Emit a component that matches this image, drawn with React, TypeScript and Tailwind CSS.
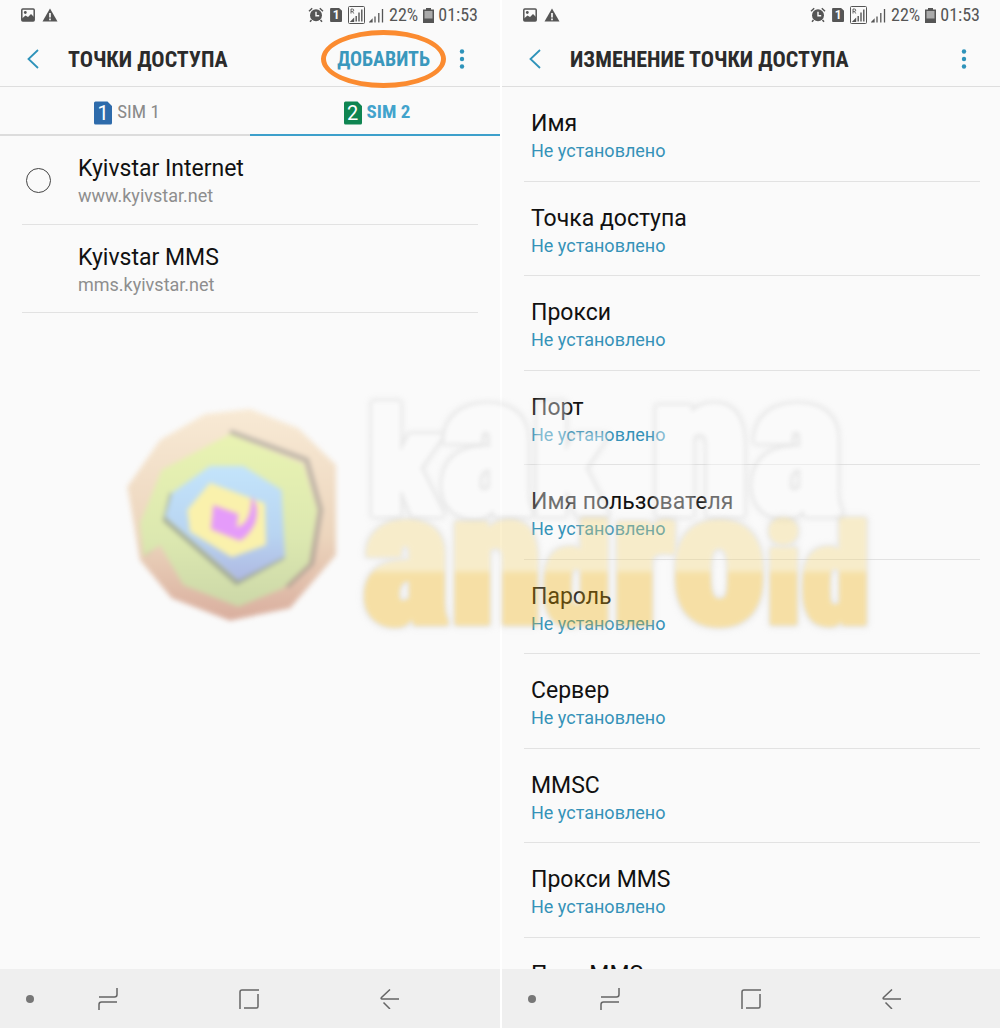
import React from "react";

const FIELDS = [
  "Имя",
  "Точка доступа",
  "Прокси",
  "Порт",
  "Имя пользователя",
  "Пароль",
  "Сервер",
  "MMSC",
  "Прокси MMS",
  "Порт MMS",
];

const CONDENSED = "font-['Roboto_Condensed',Roboto,sans-serif]";

function PictureIcon() {
  return (
    <svg viewBox="0 0 14 14" className="h-3.5 w-3.5" fill="none">
      <rect x="0.8" y="1" width="12.4" height="12" rx="1" stroke="#555" strokeWidth="1.5" />
      <path d="M1 10.5 4.5 7.5 7 9 10 6 13 9v4H1Z" fill="#555" />
      <circle cx="4.3" cy="4.5" r="1.4" fill="#555" />
    </svg>
  );
}

function WarningIcon() {
  return (
    <svg viewBox="0 0 16 14" className="h-3.5 w-4">
      <path d="M8 .5 15.5 13.5H.5Z" fill="#555" />
      <path d="M8 5v4.500M8 10.500v1.800" stroke="#fafafa" strokeWidth="1.700" />
    </svg>
  );
}

function AlarmIcon() {
  return (
    <svg viewBox="0 0 16 16" className="h-4 w-4" fill="none">
      <circle cx="8" cy="8.300" r="6" fill="#555" />
      <path d="M1 4.200 4.200 1.300M15 4.200 11.800 1.300M3.500 13 2 14.800M12.500 13 14 14.800" stroke="#555" strokeWidth="1.500" />
      <path d="M8 4.700v4h3.200" stroke="#fafafa" strokeWidth="1.400" />
    </svg>
  );
}

function SmallSimIcon() {
  return (
    <span className="flex h-3.5 w-3 items-center justify-center rounded-[1px] bg-[#555] font-[Roboto,sans-serif] text-[12px] leading-3 font-bold text-[#fafafa] [clip-path:polygon(0_0,75%_0,100%_20%,100%_100%,0_100%)]">
      1
    </span>
  );
}

function RoamingSignalIcon() {
  return (
    <svg viewBox="0 0 17 18" className="h-[18px] w-[17px]" fill="none" stroke="#555">
      <rect x="0.500" y="0.500" width="16" height="17" rx="1" />
      <path d="M3 7.500V3h1.500a1.200 1.200 0 0 1 0 2.400H3M4.500 5.400 5.700 7.500" strokeWidth="0.900" />
      <path d="M3.500 15.200h2v-2ZM8.200 15.500V10M11 15.500V6.500M13.800 15.500V3.500" strokeWidth="1.400" />
    </svg>
  );
}

function SignalIcon() {
  return (
    <svg viewBox="0 0 15 15" className="h-[15px] w-[15px]" fill="none" stroke="#555">
      <path d="M1 13.800h2v-2ZM6 14.500V8.500M9.800 14.500V5M13.500 14.500V1" strokeWidth="1.300" />
    </svg>
  );
}

function BatteryIcon() {
  return (
    <svg viewBox="0 0 11 15" className="h-[15px] w-[11px]">
      <path d="M3 0h5v1.500h3V15H0V1.500h3Z" fill="#555" />
      <rect x="1.500" y="3" width="8" height="7.500" fill="#aaa" />
    </svg>
  );
}

function StatusBar() {
  return (
    <div className="flex h-[30px] shrink-0 items-center justify-between pr-[22px] pl-[21px]">
      <div className="flex items-center gap-[7px]">
        <PictureIcon />
        <WarningIcon />
      </div>
      <div className={`flex items-center text-lg leading-5 text-[#555] ${CONDENSED}`}>
        <div className="mr-1 flex items-center gap-1.5">
          <AlarmIcon />
          <SmallSimIcon />
          <RoamingSignalIcon />
        </div>
        <SignalIcon />
        <span className="mx-[5px]">22%</span>
        <BatteryIcon />
        <span className="ml-1">01:53</span>
      </div>
    </div>
  );
}

function Header({ title, children }: { title: string; children?: React.ReactNode }) {
  return (
    <header className="flex h-[57px] shrink-0 items-center border-b border-[#dedede] pt-0.5 pr-7 pl-[23px]">
      <button aria-label="Назад" className="flex w-5 justify-center">
        <svg viewBox="0 0 12 20" className="h-5 w-3" fill="none" stroke="#2e93ba" strokeWidth="1.800">
          <path d="M11 1 1.500 10 11 19" />
        </svg>
      </button>
      <h1 className={`ml-[25px] flex-1 pt-0.5 text-[22px] leading-7 font-bold whitespace-nowrap text-[#2b2b2b] ${CONDENSED}`}>{title}</h1>
      {children}
      <button aria-label="Ещё" className="flex w-5 justify-center">
        <svg viewBox="0 0 6 20" className="h-5 w-1.5" fill="#2e93ba">
          <circle cx="3" cy="2.500" r="2.200" />
          <circle cx="3" cy="10" r="2.200" />
          <circle cx="3" cy="17.500" r="2.200" />
        </svg>
      </button>
    </header>
  );
}

function SimBadge({ label, color }: { label: string; color: string }) {
  return (
    <span className="relative flex h-6 w-[18px] items-center justify-center">
      <svg viewBox="0 0 18 24" className="absolute inset-0 h-6 w-[18px]" fill={color}>
        <path d="M1.500 .5H13.500L18 5V22a1.500 1.500 0 0 1-1.500 1.500H1.500A1.500 1.500 0 0 1 0 22V2A1.500 1.500 0 0 1 1.500 .5Z" />
      </svg>
      <span className="relative font-[Roboto,sans-serif] text-xl leading-6 font-normal text-white">{label}</span>
    </span>
  );
}

function NavBar() {
  return (
    <nav className="grid h-[59px] shrink-0 grid-cols-[60px_1fr_1fr_1fr_42px] items-center justify-items-center bg-[#efefef] text-[#666]">
      <span className="h-2 w-2 rounded-full bg-[#777]" />
      <button aria-label="Недавние" className="mr-9">
        <svg viewBox="0 0 20 22" className="h-[22px] w-5" fill="none" stroke="currentColor" strokeWidth="1.500">
          <path d="M19 0v6.500Q19 9 16.500 9H1M1 22v-5.500Q1 14 3.500 14H19" />
        </svg>
      </button>
      <button aria-label="Главный экран" className="mr-5">
        <svg viewBox="0 0 20 20" className="h-5 w-5" fill="none" stroke="currentColor" strokeWidth="1.500">
          <path d="M1 20V3Q1 1 3 1H20M19 5v12.500Q19 19 17.500 19H5" />
        </svg>
      </button>
      <button aria-label="Вернуться" className="mr-1">
        <svg viewBox="0 0 20 20" className="h-5 w-5" fill="none" stroke="currentColor" strokeWidth="1.500">
          <path d="M10 .5 1.500 8.500Q.5 10 2 10H19M3.500 13.500 10 20" />
        </svg>
      </button>
    </nav>
  );
}

function Watermark() {
  return (
    <svg viewBox="0 0 1000 250" className="pointer-events-none absolute inset-x-0 top-[390px] w-full overflow-visible">
      <defs>
        <linearGradient id="rim" x1="0" y1="0" x2="0" y2="1">
          <stop offset="0" stopColor="#f8ead5" />
          <stop offset="0.600" stopColor="#ecd5bd" />
          <stop offset="1" stopColor="#d9ae9e" />
        </linearGradient>
        <linearGradient id="lime" x1="0" y1="0" x2="0" y2="1">
          <stop offset="0" stopColor="#e9f3b2" />
          <stop offset="0.600" stopColor="#dce8b0" />
          <stop offset="1" stopColor="#ccd8a8" />
        </linearGradient>
        <linearGradient id="sky" x1="0" y1="0" x2="0" y2="1">
          <stop offset="0" stopColor="#c3e4fb" />
          <stop offset="0.600" stopColor="#b8d4f1" />
          <stop offset="1" stopColor="#aeb8e2" />
        </linearGradient>
        <linearGradient id="gold" gradientUnits="userSpaceOnUse" x1="0" y1="130" x2="0" y2="240">
          <stop offset="0.440" stopColor="#f4d574" />
          <stop offset="0.500" stopColor="#f0b00a" />
        </linearGradient>
        <filter id="glow" x="-10%" y="-20%" width="120%" height="140%" colorInterpolationFilters="sRGB">
          <feMorphology in="SourceAlpha" operator="dilate" radius="2" />
          <feGaussianBlur stdDeviation="3" result="spread" />
          <feFlood floodColor="#c8c8c8" />
          <feComposite in2="spread" operator="in" result="halo" />
          <feGaussianBlur in="SourceGraphic" stdDeviation="2" result="soft" />
          <feMerge>
            <feMergeNode in="halo" />
            <feMergeNode in="soft" />
          </feMerge>
        </filter>
        <filter id="haze" x="-10%" y="-10%" width="120%" height="120%" colorInterpolationFilters="sRGB">
          <feGaussianBlur stdDeviation="8" />
        </filter>
      </defs>
      <g transform="translate(110 0) scale(0.3333)">
        <g filter="url(#haze)">
          <path d="M285 72 420 57 565 115 678 225V495L540 655 360 692 185 625 90 510 52 290 150 150Z" fill="url(#rim)" />
          <path d="M360 125 590 210 632 360 605 520 530 590" fill="none" stroke="#777" strokeOpacity="0.450" strokeWidth="14" />
          <path d="M105 490 150 450" stroke="#777" strokeOpacity="0.500" strokeWidth="16" />
          <path d="M360 132 580 222 622 360 598 520 520 595 385 650 220 585 150 465 100 500 90 400 155 240Z" fill="url(#lime)" />
          <path d="M185 310 165 390 380 578 522 500" fill="none" stroke="#667" strokeOpacity="0.500" strokeWidth="12" />
          <path d="M300 228H400L515 300 525 500 385 572 165 380 185 310Z" fill="url(#sky)" />
          <path d="M300 278 465 340 468 465 365 502 240 425 232 360Z" fill="#faf1ac" />
          <path d="M310 345 385 372 380 412Q425 400 425 320 450 350 435 400 415 440 390 452L303 418Z" fill="#e59bfa" />
        </g>
      </g>
      <g fontFamily="'Roboto Condensed', Roboto, sans-serif" fontWeight="900" strokeLinejoin="round" strokeWidth="5">
        <text x="368" y="124" fontSize="146" fill="#fbfbfb" stroke="#fbfbfb" opacity="0.400" filter="url(#glow)">
          k<tspan fontSize="200">a</tspan>k<tspan fontSize="200"> na</tspan>
        </text>
        <text x="362" y="233" fontSize="138" fill="url(#gold)" stroke="url(#gold)" opacity="0.350" filter="url(#glow)">
          <tspan fontSize="188">an</tspan>d<tspan fontSize="188">ro</tspan>id
        </text>
      </g>
    </svg>
  );
}

export default function App() {
  return (
    <main className="relative grid h-screen grid-cols-2 overflow-hidden bg-[#fafafa] font-[Roboto,sans-serif]">
      <section className="flex min-h-0 min-w-0 flex-col">
        <StatusBar />
        <Header title="ТОЧКИ ДОСТУПА">
          <div className="relative mr-[22px] flex">
            <button className={`text-xl leading-7 font-bold text-[#3a98bd] ${CONDENSED}`}>ДОБАВИТЬ</button>
            <span className="pointer-events-none absolute -inset-x-4 -inset-y-[15px] rounded-[50%] border-[5px] border-[#fb8b30]" />
          </div>
        </Header>
        <div role="tablist" className={`grid h-[49px] shrink-0 grid-cols-2 text-[19px] ${CONDENSED}`}>
          <button role="tab" aria-selected="false" className="flex items-center justify-center gap-[5px] border-b-2 border-[#dcdcdc] pt-1 pl-1 text-[#8a8a8a]">
            <SimBadge label="1" color="#2e6bab" />
            SIM 1
          </button>
          <button role="tab" aria-selected="true" className="flex items-center justify-center gap-[5px] border-b-2 border-[#3da0cb] pt-1 pl-1 font-bold text-[#42a3cc]">
            <SimBadge label="2" color="#0f8551" />
            SIM 2
          </button>
        </div>
        <div className="flex-1 px-[22px]">
          <label className="flex h-[89px] items-center border-b border-[#e2e2e2] pl-1">
            <input type="radio" name="apn" className="mr-[27px] h-[25px] w-[25px] appearance-none rounded-full border border-[#444]" />
            <span className="pt-1">
              <span className="block text-[23px] leading-7 text-[#111]">Kyivstar Internet</span>
              <span className="block text-lg leading-[26px] text-[#8e8e8e]">www.kyivstar.net</span>
            </span>
          </label>
          <div className="flex h-[88px] items-center border-b border-[#e2e2e2] pl-14">
            <span className="pt-1">
              <span className="block text-[23px] leading-7 text-[#111]">Kyivstar MMS</span>
              <span className="block text-lg leading-[26px] text-[#8e8e8e]">mms.kyivstar.net</span>
            </span>
          </div>
        </div>
        <NavBar />
      </section>

      <section className="-mr-0.5 flex min-h-0 min-w-0 flex-col border-l-2 border-white">
        <StatusBar />
        <Header title="ИЗМЕНЕНИЕ ТОЧКИ ДОСТУПА" />
        <ul className="min-h-0 flex-1 overflow-hidden px-[22px]">
          {FIELDS.map((name) => (
            <li key={name} className="border-b border-[#e2e2e2] odd:h-[95px] even:h-[94px]">
              <button className="flex h-full w-full flex-col justify-center pt-1.5 pl-[7px] text-left">
                <span className="text-[23px] leading-7 text-[#111]">{name}</span>
                <span className="text-lg leading-[26px] text-[#3592b8]">Не установлено</span>
              </button>
            </li>
          ))}
        </ul>
        <NavBar />
      </section>
      <Watermark />
    </main>
  );
}
